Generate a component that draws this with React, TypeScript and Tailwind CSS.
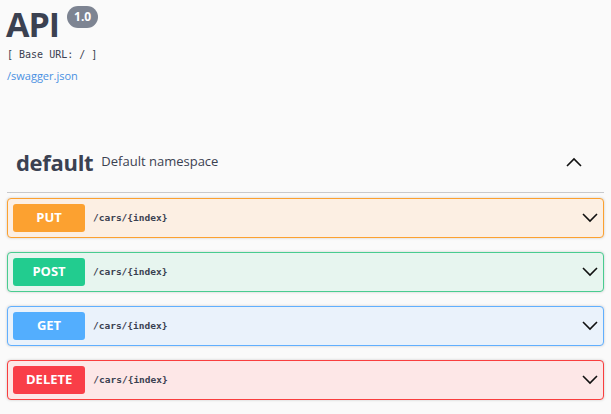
import React from 'react';

const ops = [
  { method: 'PUT', color: 'bg-[#fca130]', border: 'border-[#fca130]', bg: 'bg-[#fcefe3]' },
  { method: 'POST', color: 'bg-[#22cc8f]', border: 'border-[#49cc90]', bg: 'bg-[#e7f5ef]' },
  { method: 'GET', color: 'bg-[#53aefe]', border: 'border-[#61affe]', bg: 'bg-[#eaf2fb]' },
  { method: 'DELETE', color: 'bg-[#f93e48]', border: 'border-[#f93e3e]', bg: 'bg-[#fde7e7]' },
];

const Chevron = ({ up }: { up?: boolean }) => (
  <svg width="16" height="10" viewBox="0 0 16 10" fill="none" stroke="#111" strokeWidth="1.6">
    {up ? <path d="M1 9 L8 2 L15 9" /> : <path d="M1 1 L8 8 L15 1" />}
  </svg>
);

export default function App() {
  return (
    <div className="min-h-screen bg-[#fafafa] text-[#3b4151] font-['Open_Sans',sans-serif]">
      <div className="px-[7px]">
        <div className="pt-[2px]">
          <div className="flex items-start">
            <h1 className="text-[34px] font-bold leading-[44px] tracking-[-1px] -ml-px">API</h1>
            <span className="ml-[8px] mt-[4px] rounded-full bg-[#7d8492] px-[7px] text-[12px] font-bold leading-[22px] text-white">1.0</span>
          </div>
          <div className="mt-[1px] font-['DejaVu_Sans_Mono',monospace] text-[10px] leading-[16px]">[ Base URL: / ]</div>
          <a className="mt-[5px] block text-[11px] leading-[16px] text-[#4990e2]">/swagger.json</a>
        </div>

        <div className="mt-[47px]">
          <div className="flex h-[62px] items-center border-b border-[#c8c9cc] pl-[9px] pr-[22px]">
            <span className="text-[22px] font-bold leading-none tracking-[-0.3px]">default</span>
            <span className="ml-[8px] mt-[1px] text-[13px]">Default namespace</span>
            <span className="ml-auto"><Chevron up /></span>
          </div>
          <div className="flex flex-col gap-[14px] pt-[5px]">
            {ops.map(o => (
              <div
                key={o.method}
                className={`flex h-[40px] items-center rounded-[4px] border ${o.border} ${o.bg} pl-[5px] pr-[5px] shadow-[0_0_3px_rgba(0,0,0,0.19)]`}
              >
                <span className={`${o.color} flex h-[28px] min-w-[72px] items-center justify-center rounded-[3px] px-[13px] text-[13px] font-bold text-white`}>
                  {o.method}
                </span>
                <span className="ml-[8px] font-['DejaVu_Sans_Mono',monospace] text-[9.5px] font-bold">/cars/{'{index}'}</span>
                <span className="ml-auto"><Chevron /></span>
              </div>
            ))}
          </div>
        </div>
      </div>
    </div>
  );
}
